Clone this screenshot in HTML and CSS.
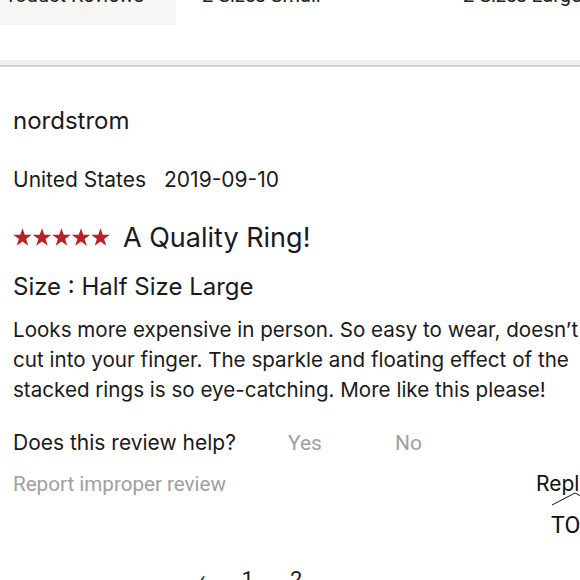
FILE: index.html
```html
<!DOCTYPE html>
<html>
<head>
<meta charset="utf-8">
<link rel="stylesheet" href="styles.css">
</head>
<body>
<div class="page">
  <div class="tabs">
    <div class="tab tab-active">Product Reviews</div>
    <div class="tab tab-small">2 Sizes Small</div>
    <div class="tab tab-large">2 Sizes Large</div>
  </div>
  <div class="band"></div>
  <div class="review">
    <div class="author">nordstrom</div>
    <div class="meta"><span>United States</span><span>2019-09-10</span></div>
    <div class="title-row">
      <svg class="stars" width="98" height="19" viewBox="0 0 98 19" aria-label="5 stars">
        <defs>
          <polygon id="st" points="9.5,0.3 11.8,6.8 18.8,6.8 13.1,10.9 15.3,17.8 9.5,13.6 3.7,17.8 5.9,10.9 0.2,6.8 7.2,6.8"/>
        </defs>
        <g fill="#b5232a">
          <use href="#st" x="0"/>
          <use href="#st" x="19.5"/>
          <use href="#st" x="39"/>
          <use href="#st" x="58.5"/>
          <use href="#st" x="78"/>
        </g>
      </svg>
      <span class="title">A Quality Ring!</span>
    </div>
    <div class="size">Size : Half Size Large</div>
    <p class="body">Looks more expensive in person. So easy to wear, doesn’t cut into your finger. The sparkle and floating effect of the stacked rings is so eye-catching. More like this please!</p>
    <div class="helpful">
      <span class="q">Does this review help?</span>
      <span class="vote yes">Yes</span>
      <span class="vote">No</span>
    </div>
    <div class="actions">
      <span class="report">Report improper review</span>
      <span class="reply">Reply</span>
    </div>
    <div class="pager">
      <span>‹</span><span>1</span><span>2</span>
    </div>
  </div>
  <div class="totop">
    <svg class="chev" width="50" height="14" viewBox="0 0 50 14"><polyline points="1,13 24,1 47,13" fill="none" stroke="#111" stroke-width="1"/></svg>
    <span>TOP</span>
  </div>
</div>
</body>
</html>
```

FILE: styles.css
```css
html, body {
  margin: 0;
  padding: 0;
  background: #fff;
  overflow: hidden;
}
.page {
  position: relative;
  width: 640px;
  height: 580px;
  overflow: hidden;
  color: #1a1a1a;
  font-family: Inter, "Liberation Sans", sans-serif;
}
.tabs {
  display: flex;
  margin-top: -17px;
  font-family: Roboto, "Liberation Sans", sans-serif;
  font-size: 20px;
  color: #222;
}
.tab {
  height: 42px;
  line-height: 24px;
  white-space: nowrap;
}
.tab-active {
  width: 176px;
  background: #f7f6f4;
  text-indent: -4px;
}
.tab-small {
  width: 261px;
  padding-left: 26px;
}
.band {
  margin-top: 35px;
  height: 5px;
  background: #efefef;
  border-bottom: 2px solid #d2d2d2;
}
.review {
  padding-left: 13px;
  width: 600px;
}
.author {
  margin-top: 39px;
  font-size: 24px;
  line-height: 30px;
}
.meta {
  margin-top: 29px;
  font-size: 21px;
  line-height: 30px;
  display: flex;
  gap: 18px;
}
.title-row {
  margin-top: 25px;
  display: flex;
  align-items: center;
  gap: 12px;
  height: 36px;
}
.stars {
  display: block;
  margin-top: -2px;
}
.title {
  font-size: 27px;
  line-height: 36px;
}
.size {
  margin-top: 16px;
  font-size: 24px;
  line-height: 30px;
}
.body {
  margin: 13px 0 0;
  font-size: 20.6px;
  line-height: 30px;
  width: 590px;
}
.helpful {
  margin-top: 23px;
  display: flex;
  font-size: 21px;
  line-height: 30px;
}
.q {
  width: 275px;
}
.vote {
  font-family: Roboto, "Liberation Sans", sans-serif;
  color: #a0a0a0;
}
.yes {
  width: 107px;
}
.actions {
  margin-top: 11px;
  display: flex;
  justify-content: space-between;
  font-family: Roboto, "Liberation Sans", sans-serif;
  font-size: 20.6px;
  line-height: 30px;
}
.report {
  color: #a0a0a0;
}
.reply {
  color: #111;
  width: 77px;
  font-family: Inter, "Liberation Sans", sans-serif;
  font-size: 21px;
}
.pager {
  margin-top: 66px;
  display: flex;
  gap: 36px;
  padding-left: 186px;
  font-family: Roboto, "Liberation Sans", sans-serif;
  font-size: 22px;
  line-height: 30px;
  color: #222;
}
.totop {
  position: absolute;
  left: 551px;
  top: 492px;
  display: flex;
  flex-direction: column;
  align-items: flex-start;
  font-family: Roboto, "Liberation Sans", sans-serif;
  font-size: 23px;
  color: #111;
}
.chev {
  display: block;
}
.totop span {
  margin-top: 8px;
  line-height: 24px;
}
```
